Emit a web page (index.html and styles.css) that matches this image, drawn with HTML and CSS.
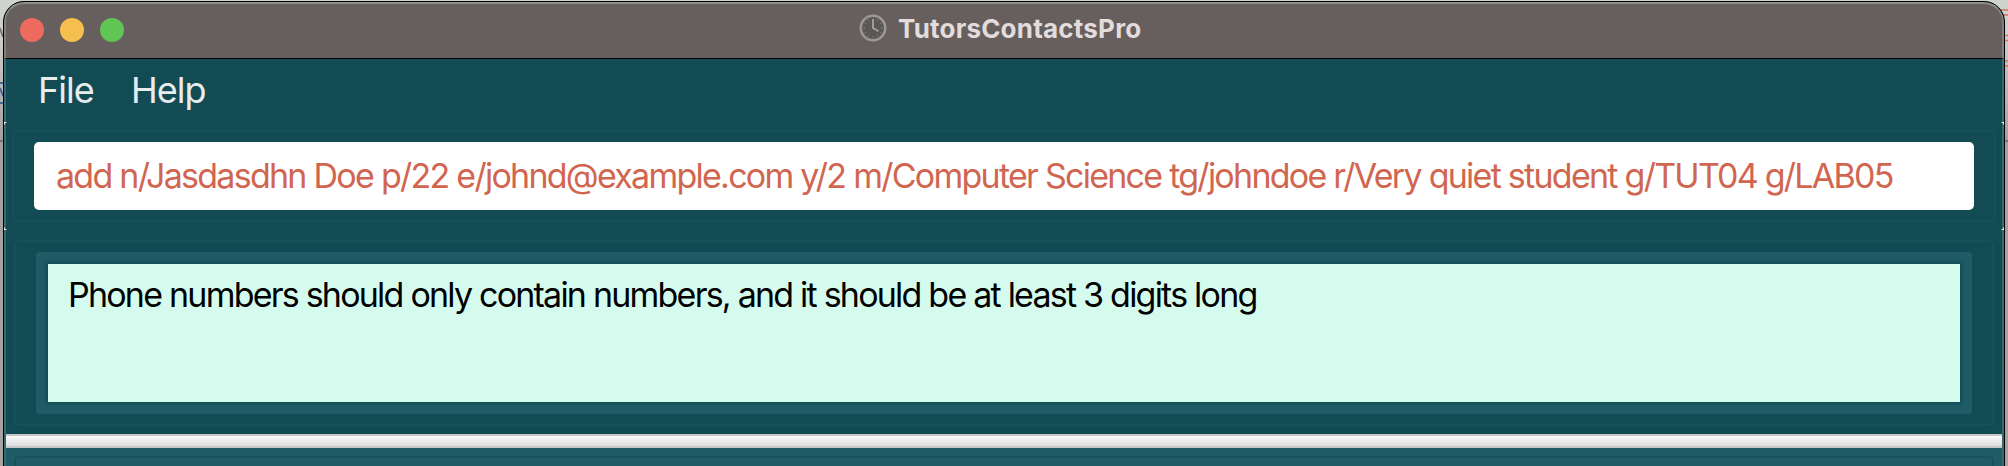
FILE: index.html
```html
<!DOCTYPE html>
<html lang="en">
<head>
<meta charset="utf-8">
<title>TutorsContactsPro</title>
<link rel="stylesheet" href="styles.css">
</head>
<body>
<div class="desktop">
  <svg class="backdrop" width="2008" height="466" viewBox="0 0 2008 466">
    <path d="M0 83h4M0 103h4M0 88l3 8" stroke="#4a6890" stroke-width="2"/>
    <path d="M0 28l3 9M0 141h4" stroke="#777" stroke-width="2" fill="none"/>
    <path d="M2000 10h8M2000 15h8M2004 35.500h4M2004 40.500h4M2004 61h4M2004 66h4" stroke="#d9705c" stroke-width="1.500"/>
    <path d="M2004 141h4" stroke="#777" stroke-width="2"/>
  </svg>
  <main class="window">
    <header class="titlebar">
      <div class="lights"><i class="light close"></i><i class="light minimise"></i><i class="light zoom"></i></div>
      <svg class="clock" width="28" height="28" viewBox="0 0 28 28" fill="none">
        <circle cx="14" cy="14" r="12.200" fill="#5a5755" stroke="#9b9997" stroke-width="2.600"/>
        <path d="M14 5v9l5.500 3.300" stroke="#a3a19f" stroke-width="1.900"/>
        <path d="M14 22v1.500M4.500 14H6M22 14h1.500M9 5.500l.7 1.200M19 5.500l-.7 1.200M5.500 9l1.200.7M22.500 9l-1.200.7M5.500 19l1.200-.7M22.500 19l-1.200-.7M9 22.500l.7-1.200M19 22.500l-.7-1.200" stroke="#8f8d8b"/>
      </svg>
      <h1 class="title">TutorsContactsPro</h1>
    </header>
    <div class="content">
      <nav class="menu"><span class="file">File</span><span class="help">Help</span></nav>
      <section class="command"><div class="outline">
        <div class="field"><span class="input-text">add n/Jasdasdhn Doe p/22 e/johnd@example.com y/2 m/Computer Science tg/johndoe r/Very quiet student g/TUT04 g/LAB05</span></div>
      </div></section>
      <section class="result"><div class="outline">
        <div class="frame"><div class="message"><span class="message-text">Phone numbers should only contain numbers, and it should be at least 3 digits long</span></div></div>
      </div></section>
      <div class="divider"></div>
      <section class="list"><div class="outline"></div></section>
    </div>
    <svg class="corners" width="2000" height="110" viewBox="0 0 2000 110" fill="none" stroke="#fff" stroke-opacity=".85">
      <path d="M0 .5h2.500M.5 0v2.500M0 107.500h2.500M.5 108v-2.500M2000 .5h-2.500M1999.500 0v2.500M2000 107.500h-2.500M1999.500 108v-2.500"/>
    </svg>
  </main>
</div>
</body>
</html>
```
FILE: styles.css
```css
* { box-sizing: border-box; }
body { margin: 0; font-family: Inter, "Liberation Sans", sans-serif; }
.desktop {
  position: relative;
  width: 2008px;
  height: 466px;
  overflow: hidden;
  padding: 1px 3px 0;
  background: linear-gradient(#ced3cb 0, #d0d0d0 30px, #a3a1a0 140px, #a6a3a1 466px);
}
.backdrop { position: absolute; left: 0; top: 0; }
.window {
  position: relative;
  width: 2002px;
  height: 480px;
  border: 1px solid #000;
  border-radius: 21px 21px 0 0;
  overflow: hidden;
  background: #124b54;
}
.corners { position: absolute; left: 0; top: 120px; }
.titlebar {
  display: flex;
  align-items: center;
  height: 57px;
  padding: 0 0 3px 14px;
  border: 2px solid #827e7c;
  border-top-color: #8f9089;
  border-bottom: 1px solid #000;
  border-radius: 20px 20px 0 0;
  background: #665f5e;
}
.lights { display: flex; gap: 16px; width: 839px; margin-top: 1px; }
.light { width: 24px; height: 24px; border-radius: 50%; }
.close { background: #ed6a5e; }
.minimise { background: #f5bf4f; }
.zoom { background: #61c554; }
.clock { flex: none; margin-bottom: 3px; }
.title { margin: 0 0 2px 11px; font-size: 26px; line-height: 30px; font-weight: 700; letter-spacing: 0.2px; color: #e2dcdc; white-space: nowrap; }
.content { height: 420px; border: solid #396a72; border-width: 0 2px; }
.menu { display: flex; height: 63px; padding: 9px 0 0 32px; font-size: 36px; line-height: 44px; color: #e7eded; letter-spacing: -1px; }
.file { width: 93px; }
.command { height: 108px; padding: 8px 6px; }
.outline { border: 2px solid #19515b; border-radius: 5px; }
.command .outline { height: 92px; padding: 10px 20px; }
.field { height: 68px; padding: 12px 0 0 22px; border-radius: 5px; background: #fff; color: #d16650; font-size: 34px; line-height: 44px; white-space: nowrap; }
.input-text { letter-spacing: -1.740px; }
.result { height: 204px; padding: 10px 8px 8px; }
.result .outline { height: 186px; padding: 10px 20px; }
.frame { height: 162px; padding: 12px; border-radius: 4px; background: #205c67; }
.message { height: 138px; padding: 9px 0 0 20px; background: #d5fbee; box-shadow: 0 0 4px 2px #124b54; color: #000; font-size: 34px; line-height: 44px; white-space: nowrap; }
.message-text { letter-spacing: -1.780px; }
.divider { height: 14px; border: solid #c8c8c8; border-width: 2px 0; background: linear-gradient(#fafafa, #dedede); }
.list { height: 60px; padding: 8px 8px 0; background: #205c67; }
.list .outline { height: 60px; border-color: #19525c; }
```
